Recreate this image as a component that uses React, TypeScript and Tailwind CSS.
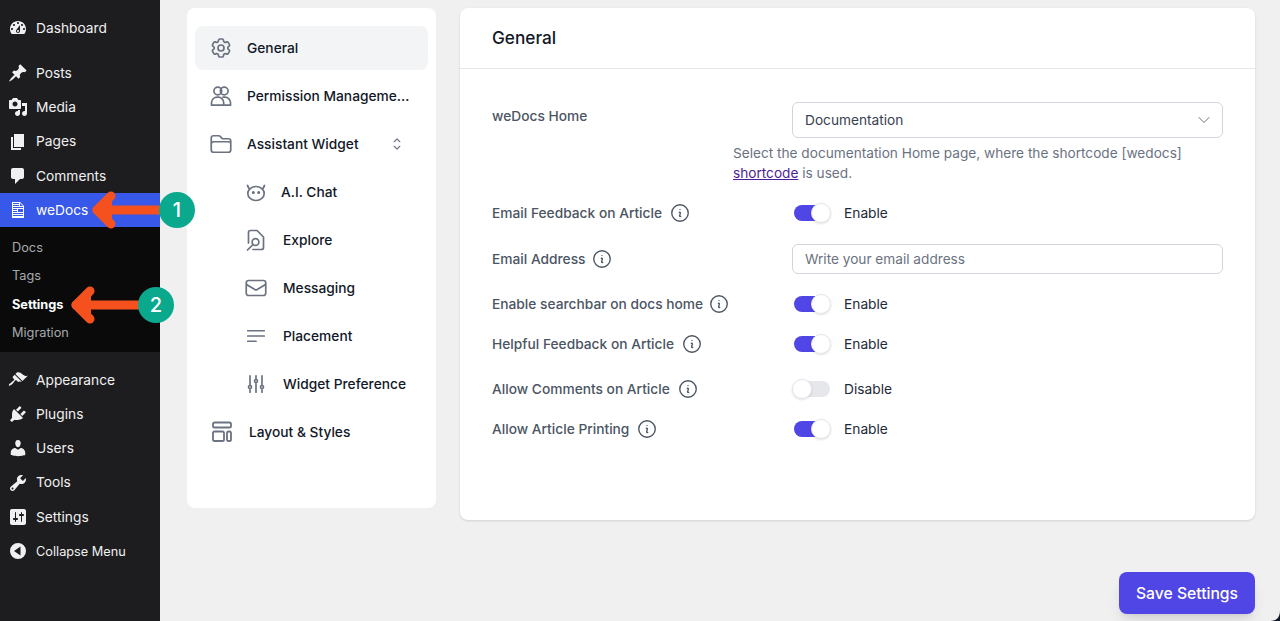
import type { ReactNode } from "react";
import {
  HiOutlineCog6Tooth,
  HiOutlineFolder,
  HiOutlineChevronUpDown,
  HiOutlineChevronDown,
  HiOutlineEnvelope,
  HiOutlineBars3BottomLeft,
  HiOutlineAdjustmentsVertical,
  HiOutlineInformationCircle,
} from "react-icons/hi2";

// dashicons paths for the wp admin menu
const dash = {
  dashboard:
    "M3.76 16h12.48c1.1-1.37 1.76-3.11 1.76-5 0-4.42-3.58-8-8-8s-8 3.58-8 8c0 1.89.66 3.63 1.76 5zM10 4c.55 0 1 .45 1 1s-.45 1-1 1-1-.45-1-1 .45-1 1-1zM6 6c.55 0 1 .45 1 1s-.45 1-1 1-1-.45-1-1 .45-1 1-1zm8 0c.55 0 1 .45 1 1s-.45 1-1 1-1-.45-1-1 .45-1 1-1zm-5.37 5.55L12 7v6c0 1.1-.9 2-2 2s-2-.9-2-2c0-.57.24-1.08.63-1.45zM4 10c.55 0 1 .45 1 1s-.45 1-1 1-1-.45-1-1 .45-1 1-1zm12 0c.55 0 1 .45 1 1s-.45 1-1 1-1-.45-1-1 .45-1 1-1zm-5 3c0-.55-.45-1-1-1s-1 .45-1 1 .45 1 1 1 1-.45 1-1z",
  pin: "M10.44 3.02l1.82-1.82 6.36 6.35-1.83 1.82c-1.05-.68-2.48-.57-3.41.36l-.75.75c-.92.93-1.04 2.35-.35 3.41l-1.83 1.82-2.41-2.41-2.8 2.79c-.42.42-3.38 2.71-3.8 2.29s1.86-3.39 2.28-3.81l2.79-2.79L4.1 9.36l1.83-1.82c1.05.69 2.48.57 3.4-.36l.75-.75c.93-.92 1.05-2.35.36-3.41z",
  media:
    "M13 11V4c0-.55-.45-1-1-1h-1.67L9 1H5L3.67 3H2c-.55 0-1 .45-1 1v7c0 .55.45 1 1 1h10c.55 0 1-.45 1-1zM7 4.5c1.38 0 2.5 1.12 2.5 2.5S8.38 9.5 7 9.5 4.5 8.38 4.5 7 5.62 4.5 7 4.5zM14 6h5v10.5c0 1.38-1.12 2.5-2.5 2.5S14 17.88 14 16.5s1.12-2.5 2.5-2.5c.17 0 .34.02.5.05V9h-3V6zm-4 8.05V13h2v3.5c0 1.38-1.12 2.5-2.5 2.5S7 17.88 7 16.5 8.12 14 9.5 14c.17 0 .34.02.5.05z",
  page: "M6 15V2h10v13H6zm-1 1h8v2H3V5h2v11z",
  comments:
    "M5 2h9c1.1 0 2 .9 2 2v7c0 1.1-.9 2-2 2h-2l-5 5v-5H5c-1.1 0-2-.9-2-2V4c0-1.1.9-2 2-2z",
  document:
    "M12 2l4 4v12H4V2h8zM5 3v1h6V3H5zm7 3h3l-3-3v3zM5 5v1h6V5H5zm10 3V7H5v1h10zM5 9v1h4V9H5zm10 3V9h-5v3h5zM5 11v1h4v-1H5zm10 3v-1H5v1h10zm0 2v-1H5v1h10z",
  appearance:
    "M14.48 11.06L7.41 3.99l1.5-1.5c.5-.56 2.3-.47 3.51.32 1.21.8 1.43 1.28 2.91 2.1 1.18.64 2.45 1.26 4.45.85zm-.71.71L6.7 4.7 4.93 6.47c-.39.39-.39 1.02 0 1.41l1.06 1.06c.39.39.39 1.03 0 1.42-.6.6-1.43 1.11-2.21 1.69-.35.26-.7.53-1.01.84C1.43 13.23.4 14.96.95 15.55c.55.59 2.33-.43 3.67-1.77.31-.31.58-.66.84-1.01.58-.78 1.09-1.61 1.69-2.21.39-.39 1.03-.39 1.42 0l1.06 1.06c.39.39 1.02.39 1.41 0z",
  plugins:
    "M13.11 4.36L9.87 7.6 8 5.73l3.24-3.24c.35-.34 1.05-.2 1.56.32.52.51.66 1.21.31 1.55zm-8 1.77l.91-1.12 9.01 9.01-1.19.84c-.71.71-2.63 1.16-3.82 1.16H6.14L4.9 17.26c-.59.59-1.54.59-2.12 0-.59-.58-.59-1.53 0-2.12l1.24-1.24v-3.88c0-1.13.4-3.19 1.09-3.89zm7.26 3.97l3.24-3.24c.34-.35 1.04-.21 1.55.31.52.51.66 1.21.31 1.55l-3.24 3.25z",
  users:
    "M10 9.25c-2.27 0-2.73-3.44-2.73-3.44C7 4.02 7.82 2 9.97 2c2.16 0 2.98 2.02 2.71 3.81 0 0-.41 3.44-2.68 3.44zm0 2.57L12.72 10c2.39 0 4.52 2.33 4.52 4.53v2.49s-3.65 1.13-7.24 1.13c-3.65 0-7.24-1.13-7.24-1.13v-2.49c0-2.25 1.94-4.48 4.47-4.48z",
  tools:
    "M16.68 9.77c-1.34 1.34-3.3 1.67-4.95.99l-5.41 6.52c-.99.99-2.59.99-3.58 0s-.99-2.59 0-3.57l6.52-5.42c-.68-1.65-.35-3.61.99-4.95 1.28-1.28 3.12-1.62 4.72-1.06l-2.89 2.89 2.82 2.82 2.86-2.87c.53 1.58.18 3.39-1.08 4.65zM3.81 16.21c.4.39 1.04.39 1.43 0 .4-.4.4-1.04 0-1.43-.39-.4-1.03-.4-1.43 0-.39.39-.39 1.03 0 1.43z",
  settings:
    "M18 16V4c0-1.1-.9-2-2-2H4c-1.1 0-2 .9-2 2v12c0 1.1.9 2 2 2h12c1.1 0 2-.9 2-2zM8 11h1c.55 0 1 .45 1 1s-.45 1-1 1H8v1.5c0 .28-.22.5-.5.5s-.5-.22-.5-.5V13H6c-.55 0-1-.45-1-1s.45-1 1-1h1V5.5c0-.28.22-.5.5-.5s.5.22.5.5V11zm5-2h-1c-.55 0-1-.45-1-1s.45-1 1-1h1V5.5c0-.28.22-.5.5-.5s.5.22.5.5V7h1c.55 0 1 .45 1 1s-.45 1-1 1h-1v5.5c0 .28-.22.5-.5.5s-.5-.22-.5-.5V9z",
  collapse: "M10 2a8 8 0 1 0 0 16 8 8 0 0 0 0-16zM12.5 5.5v9L6 10z",
};

function Dash({ d }: { d: string }) {
  return (
    <svg viewBox="0 0 20 20" className="h-5 w-5 shrink-0" fill="currentColor" fillRule="evenodd">
      <path d={d} />
    </svg>
  );
}

function MenuItem({ icon, label, small }: { icon: string; label: string; small?: boolean }) {
  return (
    <div className="flex h-[34.25px] items-center gap-2 pl-2 text-[#f0f0f1]">
      <Dash d={icon} />
      <span className={small ? "text-[12.75px]" : "text-[13.75px]"}>{label}</span>
    </div>
  );
}

function WpSidebar() {
  const subItems = ["Docs", "Tags", "Settings", "Migration"];
  return (
    <aside className="h-full w-40 shrink-0 bg-[#1d1d1f]">
      <div className="flex h-[56px] items-start pt-[11px]">
        <div className="w-full">
          <MenuItem icon={dash.dashboard} label="Dashboard" />
        </div>
      </div>
      <MenuItem icon={dash.pin} label="Posts" />
      <MenuItem icon={dash.media} label="Media" />
      <MenuItem icon={dash.page} label="Pages" />
      <MenuItem icon={dash.comments} label="Comments" />
      <div className="flex h-[34px] items-center gap-2 bg-[#3858e9] pl-2 text-white">
        <Dash d={dash.document} />
        <span className="text-[13.75px]">weDocs</span>
      </div>
      <div className="bg-[#0a0a0b] pt-[6.5px] pb-[5.5px]">
        {subItems.map((item) => (
          <div
            key={item}
            className={
              item === "Settings"
                ? "flex h-[28.25px] items-center pl-3 text-[12.75px] font-bold text-white"
                : "flex h-[28.25px] items-center pl-3 text-[12.75px] text-[#a7aaad]"
            }
          >
            {item}
          </div>
        ))}
      </div>
      <div className="pt-[10.8px]">
        <MenuItem icon={dash.appearance} label="Appearance" />
        <MenuItem icon={dash.plugins} label="Plugins" />
        <MenuItem icon={dash.users} label="Users" />
        <MenuItem icon={dash.tools} label="Tools" />
        <MenuItem icon={dash.settings} label="Settings" />
        <MenuItem icon={dash.collapse} label="Collapse Menu" small />
      </div>
    </aside>
  );
}

function PeopleIcon() {
  return (
    <svg viewBox="0 0 24 24" className="h-6 w-6 shrink-0" fill="none" stroke="#6b7280" strokeWidth="1.7">
      <circle cx="8.8" cy="7" r="3.9" />
      <circle cx="15.2" cy="7" r="3.9" />
      <path d="M2.5 21.2v-2.4c0-3.3 2.6-5.6 5.6-5.6h1.2c3 0 5.4 2.4 5.4 5.6v2.4z" strokeLinejoin="round" />
      <path d="M13.4 13.2h2.6c3 0 5.5 2.4 5.5 5.6v2.4h-6.5" strokeLinejoin="round" />
    </svg>
  );
}

function BotIcon() {
  return (
    <svg viewBox="0 0 24 24" className="mr-[-2px] h-6 w-6 shrink-0" fill="none" stroke="#6b7280" strokeWidth="1.7" strokeLinecap="round">
      <ellipse cx="12" cy="13.5" rx="8.2" ry="7" />
      <path d="M3.5 5.5 5 8.5M20.5 5.5 19 8.5" />
      <circle cx="9.3" cy="12.5" r=".7" fill="#6b7280" />
      <circle cx="14.7" cy="12.5" r=".7" fill="#6b7280" />
    </svg>
  );
}

function ExploreIcon() {
  return (
    <svg viewBox="0 0 24 24" className="h-6 w-6 shrink-0" fill="none" stroke="#6b7280" strokeWidth="1.7" strokeLinecap="round" strokeLinejoin="round">
      <path d="M4.5 15V4.5A2 2 0 0 1 6.5 2.5H13l6.5 6.5v10.5a2 2 0 0 1-2 2H9" />
      <circle cx="11.5" cy="14" r="3.4" />
      <path d="M9 16.5 3.5 22" />
    </svg>
  );
}

function LayoutIcon() {
  return (
    <svg viewBox="0 0 24 24" className="mr-[2px] h-6 w-6 shrink-0" fill="none" stroke="#6b7280" strokeWidth="1.8">
      <rect x="4" y="2.5" width="18" height="5" rx="1.6" />
      <rect x="4" y="11.5" width="11" height="9.5" rx="1.6" />
      <rect x="18" y="11.5" width="4" height="9.5" rx="1.6" />
    </svg>
  );
}

function NavRow({
  icon,
  label,
  active,
  sub,
  right,
}: {
  icon: ReactNode;
  label: string;
  active?: boolean;
  sub?: boolean;
  right?: ReactNode;
}) {
  if (sub) {
    return (
      <div className="flex h-12 items-center gap-[15px] pl-[49px]">
        {icon}
        <span className="text-[13.75px] font-medium text-[#111827]">{label}</span>
      </div>
    );
  }
  return (
    <div
      className={
        active
          ? "my-[2px] flex h-11 items-center gap-[14px] rounded-lg bg-[#f3f4f6] pl-[14px]"
          : "flex h-12 items-center gap-[14px] pl-[14px]"
      }
    >
      {icon}
      <span className="text-[13.75px] font-medium text-[#111827]">{label}</span>
      {right}
    </div>
  );
}

function Toggle({ on }: { on: boolean }) {
  return (
    <div className="flex items-center">
      <div className={on ? "relative ml-[2px] h-4 w-9 rounded-full bg-[#4f46e5]" : "relative ml-[2px] h-4 w-9 rounded-full bg-[#e5e7eb]"}>
        <span
          className={
            on
              ? "absolute top-[-2px] right-[-1px] h-5 w-5 rounded-full border border-[#e5e7eb] bg-white shadow-sm"
              : "absolute top-[-2px] left-[-2px] h-5 w-5 rounded-full border border-[#e5e7eb] bg-white shadow-sm"
          }
        />
      </div>
      <span className="ml-[14px] text-[13.75px] text-[#1f2937]">{on ? "Enable" : "Disable"}</span>
    </div>
  );
}

function Label({ text, tight }: { text: string; tight?: boolean }) {
  return (
    <div className={tight ? "flex w-[300px] shrink-0 items-center gap-[5px]" : "flex w-[300px] shrink-0 items-center gap-[7px]"}>
      <span className="text-[13.75px] font-medium text-[#4b5563]">{text}</span>
      <HiOutlineInformationCircle className="h-[22px] w-[22px] text-[#4b5563]" />
    </div>
  );
}

function ToggleRow({ text, on, tight, className }: { text: string; on: boolean; tight?: boolean; className: string }) {
  return (
    <div className={`flex h-5 items-center ${className}`}>
      <Label text={text} tight={tight} />
      <Toggle on={on} />
    </div>
  );
}

function Arrow({ points }: { points: string }) {
  return (
    <polyline
      points={points}
      fill="none"
      stroke="#f4511e"
      strokeWidth="9"
      strokeLinecap="round"
      strokeLinejoin="round"
    />
  );
}

export default function App() {
  const iconClass = "h-6 w-6 shrink-0 text-[#6b7280]";
  return (
    <div className="relative flex h-[621px] w-[1280px] overflow-hidden bg-[#f0f0f1] font-['Inter',sans-serif]">
      <WpSidebar />

      <main className="flex items-start gap-6 pt-2 pl-[27px]">
        <nav className="h-[500px] w-[249px] shrink-0 rounded-lg bg-white px-2 pt-4">
          <NavRow icon={<HiOutlineCog6Tooth className={iconClass} strokeWidth={1.7} />} label="General" active />
          <NavRow icon={<PeopleIcon />} label="Permission Manageme..." />
          <NavRow
            icon={<HiOutlineFolder className={iconClass} strokeWidth={1.7} />}
            label="Assistant Widget"
            right={<HiOutlineChevronUpDown className="ml-[15px] h-[18px] w-[18px] text-[#6b7280]" />}
          />
          <NavRow icon={<BotIcon />} label="A.I. Chat" sub />
          <NavRow icon={<ExploreIcon />} label="Explore" sub />
          <NavRow icon={<HiOutlineEnvelope className={iconClass} strokeWidth={1.7} />} label="Messaging" sub />
          <NavRow icon={<HiOutlineBars3BottomLeft className={iconClass} strokeWidth={1.7} />} label="Placement" sub />
          <NavRow icon={<HiOutlineAdjustmentsVertical className={iconClass} strokeWidth={1.7} />} label="Widget Preference" sub />
          <NavRow icon={<LayoutIcon />} label="Layout & Styles" />
        </nav>

        <div className="flex w-[795px] shrink-0 flex-col">
          <section className="h-[512px] rounded-lg bg-white shadow-sm">
            <h2 className="flex h-[61px] items-center border-b border-[#e5e7eb] pl-8 text-[17.2px] font-medium text-[#111827]">
              General
            </h2>
            <div className="pt-[33px] pr-8 pl-8">
              <div className="flex items-start">
                <div className="w-[300px] shrink-0 pt-[4px] text-[13.75px] font-medium text-[#4b5563]">weDocs Home</div>
                <div className="flex h-9 flex-1 items-center justify-between rounded-md border border-[#d1d5db] pr-[10px] pl-3 text-[13.7px] text-[#374151]">
                  Documentation
                  <HiOutlineChevronDown className="h-4 w-4 text-[#6b7280]" />
                </div>
              </div>
              <p className="mt-[5px] ml-[241px] text-[13.65px] leading-5 text-[#6b7280]">
                Select the documentation Home page, where the shortcode [wedocs]
                <br />
                <span className="text-[#4c1d95] underline">shortcode</span> is used.
              </p>
              <ToggleRow text="Email Feedback on Article" on className="mt-5" />
              <div className="mt-[21px] flex items-center">
                <Label text="Email Address" tight />
                <div className="flex h-[30px] flex-1 items-center rounded-md border border-[#d1d5db] pl-3 text-[13.65px] text-[#6b7280]">
                  Write your email address
                </div>
              </div>
              <ToggleRow text="Enable searchbar on docs home" on tight className="mt-5" />
              <ToggleRow text="Helpful Feedback on Article" on className="mt-5" />
              <ToggleRow text="Allow Comments on Article" on={false} className="mt-[25px]" />
              <ToggleRow text="Allow Article Printing" on className="mt-5" />
            </div>
          </section>

          <button className="mt-[52px] h-[42px] w-[136px] self-end rounded-lg bg-[#4f46e5] pt-px text-[15.7px] font-medium text-white shadow-lg">
            Save Settings
          </button>
        </div>
      </main>

      {/* annotation arrows drawn over the screenshot */}
      <svg className="absolute top-0 left-0 h-[621px] w-[1280px]" viewBox="0 0 1280 621" fill="none">
        <Arrow points="165,210 97,210" />
        <Arrow points="111,196 97,210 111,224" />
        <path d="M95 210 112 197V223Z" fill="#f4511e" />
        <Arrow points="145,305 76,305" />
        <Arrow points="90,291 76,305 90,319" />
        <path d="M74 305 91 292V318Z" fill="#f4511e" />
        <path d="M1280 610V621H1270Q1280 621 1280 610Z" fill="#0f172a" />
      </svg>
      <div className="absolute top-[192px] left-[159px] flex h-9 w-9 items-center justify-center rounded-full bg-[#0aa88d] text-xl font-medium text-white">
        1
      </div>
      <div className="absolute top-[287px] left-[138px] flex h-9 w-9 items-center justify-center rounded-full bg-[#0aa88d] text-xl font-medium text-white">
        2
      </div>
    </div>
  );
}
